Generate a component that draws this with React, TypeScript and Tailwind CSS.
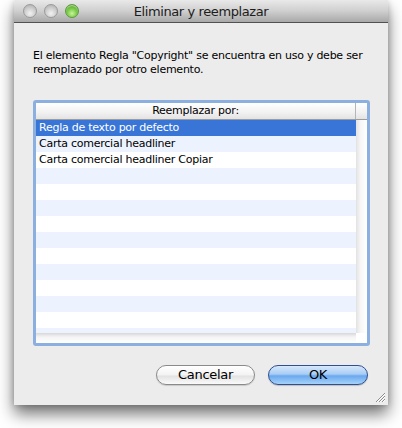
import React from "react";

const rows = ["Regla de texto por defecto", "Carta comercial headliner", "Carta comercial headliner Copiar"];

function Light({ green }: { green?: boolean }) {
  return (
    <div
      className={
        green
          ? "w-[14px] h-[14px] rounded-full border border-[#5c9a3c] bg-[radial-gradient(circle_at_50%_70%,#c6f59a_0%,#7dcc4a_45%,#3f8f1f_100%)] shadow-[inset_0_1px_1px_rgba(255,255,255,0.6)]"
          : "w-[14px] h-[14px] rounded-full border border-[#9a9a9a] bg-[radial-gradient(circle_at_50%_70%,#f2f2f2_0%,#cfcfcf_50%,#a9a9a9_100%)]"
      }
    />
  );
}

export default function App() {
  const list = Array.from({ length: 14 }, (_, i) => rows[i] ?? "");

  return (
    <div className="w-[402px] h-[428px] bg-white pl-[14px] font-['DejaVu_Sans',sans-serif] text-black overflow-hidden">
      <div className="w-[374px] h-[405px] bg-[#ececec] rounded-t-[5px] shadow-[0_9px_16px_rgba(0,0,0,0.55),0_0_6px_rgba(0,0,0,0.2)] flex flex-col relative">
        {/* title bar */}
        <div className="h-[23px] rounded-t-[5px] border-b border-[#515151] bg-[linear-gradient(#e9e9e9,#cfcfcf_50%,#a8a8a8)] flex items-center relative">
          <div className="flex gap-[7px] pl-[9px]">
            <Light />
            <Light />
            <Light green />
          </div>
          <span className="absolute left-0 right-0 text-center text-[13px] leading-[23px] text-[#1c1c1c] tracking-[-0.4px]">
            Eliminar y reemplazar
          </span>
        </div>

        <p className="mt-[22px] mx-[19px] pt-[4px] text-[11px] leading-[14px] tracking-[-0.25px]">
          El elemento Regla "Copyright" se encuentra en uso y debe ser reemplazado por otro elemento.
        </p>

        {/* list box */}
        <div className="mt-[23px] ml-[19px] w-[337px] h-[246px] border-[3px] border-[#8bb0e0] rounded-[3px]">
          <div className="w-full h-full bg-white flex flex-col overflow-hidden">
            <div className="flex h-[17px] border-b border-[#9c9c9c] bg-[linear-gradient(#ffffff,#f1f1f1_60%,#e3e3e3)]">
              <div className="flex-1 text-center text-[11px] leading-[16px] tracking-[-0.25px] border-r border-[#b5b5b5]">
                Reemplazar por:
              </div>
              <div className="w-[11px]" />
            </div>
            <div className="flex flex-1 overflow-hidden">
              <div className="flex-1 flex flex-col overflow-hidden">
                {list.map((t, i) => (
                  <div
                    key={i}
                    className={
                      "h-[16px] shrink-0 pl-[3px] text-[11px] leading-[16px] tracking-[-0.25px] " +
                      (i === 0 ? "bg-[#3875d7] text-white" : i % 2 === 1 ? "bg-[#edf3fe]" : "bg-white")
                    }
                  >
                    {t}
                  </div>
                ))}
              </div>
              <div className="w-[11px] bg-[linear-gradient(90deg,#e2e2e2,#f6f6f6_40%,#ffffff)]" />
            </div>
            <div className="h-[10px] flex shrink-0">
              <div className="flex-1 bg-[linear-gradient(#d8d8d8,#f4f4f4_40%,#ffffff)]" />
              <div className="w-[11px] bg-white" />
            </div>
          </div>
        </div>

        {/* buttons */}
        <div className="mt-[19px] flex justify-end gap-[13px] pr-[20px]">
          <button className="w-[99px] h-[20px] rounded-full border border-[#8a8a8a] bg-[linear-gradient(#ffffff,#f3f3f3_50%,#e2e2e2_55%,#fafafa)] text-[13px] leading-[18px] tracking-[-0.3px] shadow-[0_1px_1px_rgba(0,0,0,0.15)]">
            Cancelar
          </button>
          <button className="w-[100px] h-[20px] rounded-full border border-[#2f4f8f] bg-[linear-gradient(#d7e8fb,#a8cdf5_45%,#6aa8ee_55%,#a6d2fb)] text-[13px] leading-[18px] tracking-[-0.3px] shadow-[0_1px_1px_rgba(0,0,0,0.2)]">
            OK
          </button>
        </div>

        {/* resize grip */}
        <svg className="absolute right-[2px] bottom-[2px]" width="11" height="11" viewBox="0 0 11 11">
          <path d="M1 10 L10 1 M4 10 L10 4 M7 10 L10 7" stroke="#8c8c8c" strokeWidth="1" />
          <path d="M2 10 L10 2 M5 10 L10 5 M8 10 L10 8" stroke="#ffffff" strokeWidth="1" />
        </svg>
      </div>
    </div>
  );
}
